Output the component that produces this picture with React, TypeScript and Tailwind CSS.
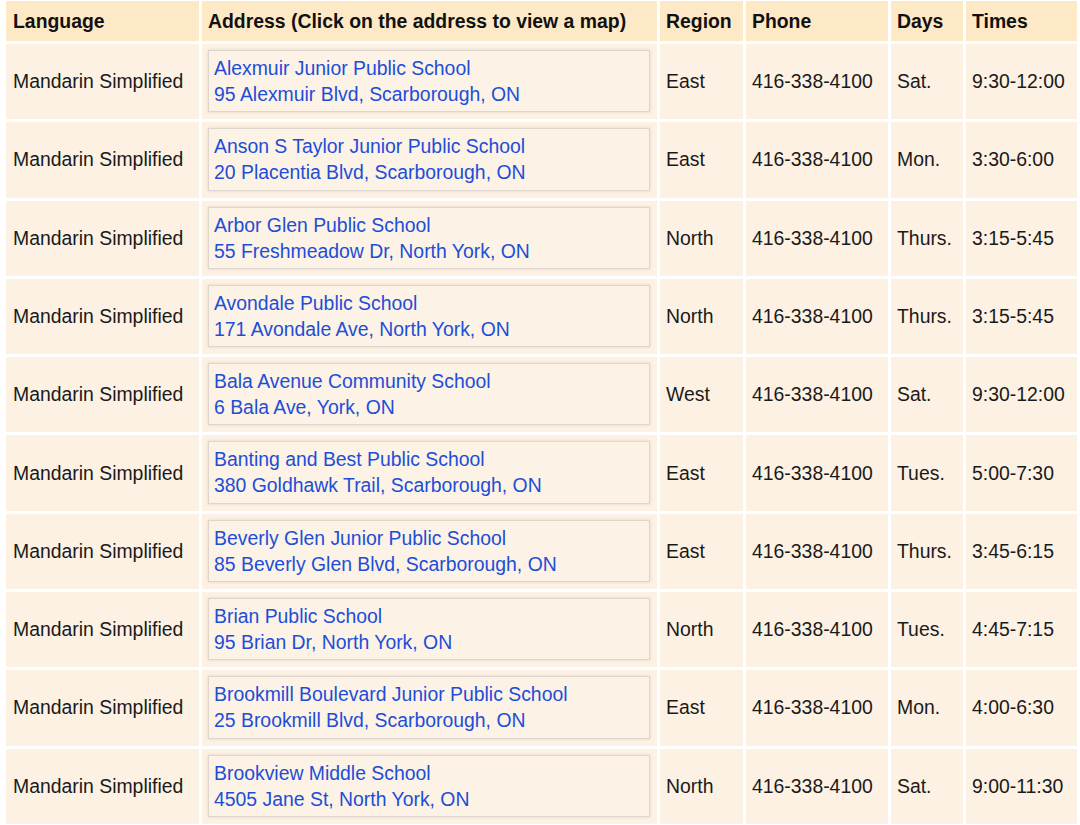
import React from "react";

type Row = { school: string; addr: string; region: string; day: string; time: string };

const rows: Row[] = [
  { school: "Alexmuir Junior Public School", addr: "95 Alexmuir Blvd, Scarborough, ON", region: "East", day: "Sat.", time: "9:30-12:00" },
  { school: "Anson S Taylor Junior Public School", addr: "20 Placentia Blvd, Scarborough, ON", region: "East", day: "Mon.", time: "3:30-6:00" },
  { school: "Arbor Glen Public School", addr: "55 Freshmeadow Dr, North York, ON", region: "North", day: "Thurs.", time: "3:15-5:45" },
  { school: "Avondale Public School", addr: "171 Avondale Ave, North York, ON", region: "North", day: "Thurs.", time: "3:15-5:45" },
  { school: "Bala Avenue Community School", addr: "6 Bala Ave, York, ON", region: "West", day: "Sat.", time: "9:30-12:00" },
  { school: "Banting and Best Public School", addr: "380 Goldhawk Trail, Scarborough, ON", region: "East", day: "Tues.", time: "5:00-7:30" },
  { school: "Beverly Glen Junior Public School", addr: "85 Beverly Glen Blvd, Scarborough, ON", region: "East", day: "Thurs.", time: "3:45-6:15" },
  { school: "Brian Public School", addr: "95 Brian Dr, North York, ON", region: "North", day: "Tues.", time: "4:45-7:15" },
  { school: "Brookmill Boulevard Junior Public School", addr: "25 Brookmill Blvd, Scarborough, ON", region: "East", day: "Mon.", time: "4:00-6:30" },
  { school: "Brookview Middle School", addr: "4505 Jane St, North York, ON", region: "North", day: "Sat.", time: "9:00-11:30" },
];

const headers = ["Language", "Address (Click on the address to view a map)", "Region", "Phone", "Days", "Times"];

const Cell: React.FC<{ children: React.ReactNode }> = ({ children }) => (
  <div className="bg-[#fcf1e3] h-[75.3px] flex items-center px-[6px]">{children}</div>
);

export default function App() {
  return (
    <div className="bg-white w-[1080px] h-[825px] overflow-hidden pl-[6px] pt-[1px] text-[19.4px] text-[#1a1a1a]" style={{ fontFamily: '"Liberation Sans", Arial, sans-serif' }}>
      <div className="grid grid-cols-[193px_455px_83px_142px_72px_111px] gap-x-[3px] gap-y-[3px]">
        {headers.map(h => (
          <div key={h} className="bg-[#fee9c7] h-[40px] flex items-center px-[6px] first:px-[7px] pt-[2px] font-bold text-[#111]">{h}</div>
        ))}
        {rows.map(r => (
          <React.Fragment key={r.school}>
            <div className="bg-[#fcf1e3] h-[75.3px] flex items-center px-[7px]">Mandarin Simplified</div>
            <div className="bg-[#fcf1e3] h-[75.3px] pl-[6px] pr-[7px] pt-[6px] pb-[7px]">
              <a href="#" className="block h-full border border-[#dcd6ce] shadow-[0_0_3px_rgba(0,0,0,0.12)] bg-[#fcf2e5] px-[5px] pt-[4px] leading-[26px] text-[#1d4ed8]">
                <div>{r.school}</div>
                <div>{r.addr}</div>
              </a>
            </div>
            <Cell>{r.region}</Cell>
            <Cell>416-338-4100</Cell>
            <Cell>{r.day}</Cell>
            <Cell>{r.time}</Cell>
          </React.Fragment>
        ))}
      </div>
    </div>
  );
}
